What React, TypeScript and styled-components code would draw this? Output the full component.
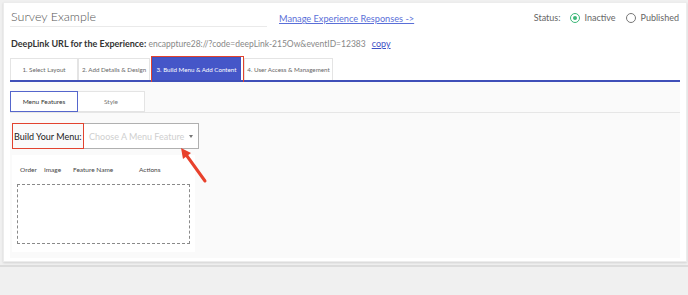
import React from 'react';
import styled, { createGlobalStyle } from 'styled-components';

const GlobalStyle = createGlobalStyle`
  html, body {
    margin: 0;
    padding: 0;
    background: #f0f0f0;
    font-family: Lato, 'Liberation Sans', sans-serif;
    color: #555;
  }
`;

const Page = styled.div`
  width: 688px;
  height: 295px;
  overflow: hidden;
`;

const Card = styled.div`
  margin: 2px 1px 0 3px;
  height: 260px;
  background: #fff;
  box-shadow: 0 1px 2px rgba(0, 0, 0, 0.12);
  border: 1px solid #ececec;
  box-sizing: border-box;
  padding: 0 6px;
  display: flex;
  flex-direction: column;
`;

const Footer = styled.div`
  margin-top: 3px;
  border-top: 2px solid #dcdcdc;
  height: 30px;
  background: #f0f0f0;
`;

const HeaderRow = styled.div`
  display: flex;
  align-items: flex-end;
  height: 24px;
  padding-top: 3px;
  box-sizing: border-box;
`;

const TitleInput = styled.div`
  width: 257px;
  height: 19px;
  border-bottom: 1px solid #eaeaea;
  font-size: 12.5px;
  font-weight: 300;
  color: #555;
  line-height: 17px;
  padding-left: 1px;
  box-sizing: border-box;
`;

const ManageLink = styled.a`
  margin-left: 12px;
  font-size: 9.2px;
  color: #5a6fd8;
  text-decoration: underline;
  line-height: 14px;
  margin-bottom: 1px;
`;

const Status = styled.div`
  margin-left: auto;
  display: flex;
  align-items: center;
  font-size: 9px;
  color: #666;
  line-height: 14px;
  margin-bottom: 2px;
  padding-right: 1px;
`;

const Radio = styled.span<{ $checked?: boolean }>`
  width: 8px;
  height: 8px;
  border-radius: 50%;
  border: 1.5px solid ${(p) => (p.$checked ? '#3cb878' : '#777')};
  display: inline-flex;
  align-items: center;
  justify-content: center;
  margin: 0 5px 0 ${(p) => (p.$checked ? 9 : 10)}px;
  &::after {
    content: '';
    width: 4px;
    height: 4px;
    border-radius: 50%;
    background: ${(p) => (p.$checked ? '#3cb878' : 'transparent')};
  }
`;

const DeepLinkRow = styled.div`
  margin-top: 10px;
  font-size: 9px;
  line-height: 14px;
  color: #888;
  padding-left: 1px;
`;

const Strong = styled.span`
  color: #333;
  font-weight: 700;
`;

const Value = styled.span`
  font-size: 8.5px;
`;

const CopyLink = styled.a`
  margin-left: 6px;
  color: #3f51c5;
  text-decoration: underline;
`;

const TabBar = styled.div`
  margin-top: 4px;
  display: flex;
  align-items: flex-end;
  border-bottom: 2px solid #3f4fb8;
  height: 25px;
  position: relative;
`;

const Tab = styled.div<{ $active?: boolean; $w: number }>`
  width: ${(p) => p.$w}px;
  height: ${(p) => (p.$active ? 23 : 22)}px;
  box-sizing: border-box;
  border: 1px solid ${(p) => (p.$active ? '#4052c0' : '#e4e4e4')};
  border-bottom: none;
  background: ${(p) => (p.$active ? '#4556c8' : '#fff')};
  color: ${(p) => (p.$active ? '#fff' : '#666')};
  font-size: 6.2px;
  display: flex;
  align-items: center;
  justify-content: center;
  white-space: nowrap;
  margin-right: ${(p) => (p.$active ? 3 : 0)}px;
  margin-left: ${(p) => (p.$active ? 2 : 0)}px;
`;

const Highlight = styled.div<{ $l: number; $t: number; $w: number; $h: number }>`
  position: absolute;
  left: ${(p) => p.$l}px;
  top: ${(p) => p.$t}px;
  width: ${(p) => p.$w}px;
  height: ${(p) => p.$h}px;
  border: 1.5px solid #e2432f;
  box-sizing: border-box;
  pointer-events: none;
`;

const Panel = styled.div`
  background: #fafafa;
  height: 176px;
  padding-top: 9px;
  box-sizing: border-box;
  position: relative;
`;

const SubTabs = styled.div`
  display: flex;
  border-bottom: 1px solid #e6e6e6;
  height: 21px;
`;

const SubTab = styled.div<{ $active?: boolean }>`
  width: ${(p) => (p.$active ? 68 : 67)}px;
  height: 21px;
  box-sizing: border-box;
  background: #fff;
  border: ${(p) => (p.$active ? '1.5px solid #5566cc' : '1px solid #e4e4e4')};
  border-left: ${(p) => (p.$active ? '1.5px solid #5566cc' : 'none')};
  font-size: 6.5px;
  color: ${(p) => (p.$active ? '#333' : '#777')};
  display: flex;
  align-items: center;
  justify-content: center;
`;

const BuildRow = styled.div`
  margin: 10px 0 0 2px;
  display: flex;
  height: 26px;
  position: relative;
`;

const BuildLabel = styled.div`
  width: 72px;
  box-sizing: border-box;
  display: flex;
  align-items: center;
  padding-left: 2px;
  font-size: 9px;
  color: #222;
  white-space: nowrap;
`;

const Select = styled.div`
  width: 115px;
  box-sizing: border-box;
  border: 1px solid #b0b0b0;
  border-left: none;
  background: #fff;
  display: flex;
  align-items: center;
  padding: 0 5px;
  font-size: 9px;
  color: #cfcfcf;
  white-space: nowrap;
  overflow: hidden;
`;

const Caret = styled.span`
  margin-left: auto;
  width: 0;
  height: 0;
  border-left: 2.5px solid transparent;
  border-right: 2.5px solid transparent;
  border-top: 3px solid #777;
`;

const TableArea = styled.div`
  margin: 6px 0 0 2px;
  width: 183px;
  height: 97px;
  background: #fff;
  padding: 6px 5px 0;
  box-sizing: border-box;
`;

const HeadRow = styled.div`
  display: grid;
  grid-template-columns: 24px 29px 66px auto;
  font-size: 6.5px;
  color: #444;
  padding-left: 3px;
  height: 16px;
  align-items: center;
`;

const DropZone = styled.div`
  margin-top: 7px;
  height: 58px;
  border: 1px dashed #8a8a8a;
  background: #fff;
`;

const Arrow = styled.svg`
  position: absolute;
  left: 160px;
  top: 55px;
  overflow: visible;
`;

export default function App() {
  return (
    <Page>
      <GlobalStyle />
      <Card>
        <HeaderRow>
          <TitleInput>Survey Example</TitleInput>
          <ManageLink>Manage Experience Responses -&gt;</ManageLink>
          <Status>
            Status:
            <Radio $checked />
            Inactive
            <Radio />
            Published
          </Status>
        </HeaderRow>
        <DeepLinkRow>
          <Strong>DeepLink URL for the Experience:</Strong>{' '}
          <Value>encappture28://?code=deepLink-215Ow&amp;eventID=12383</Value>
          <CopyLink>copy</CopyLink>
        </DeepLinkRow>
        <TabBar>
          <Tab $w={68}>1. Select Layout</Tab>
          <Tab $w={72}>2. Add Details &amp; Design</Tab>
          <Tab $w={89} $active>3. Build Menu &amp; Add Content</Tab>
          <Tab $w={89}>4. User Access &amp; Management</Tab>
          <Highlight $l={141} $t={1} $w={93} $h={32} />
        </TabBar>
        <Panel>
          <SubTabs>
            <SubTab $active>Menu Features</SubTab>
            <SubTab>Style</SubTab>
          </SubTabs>
          <BuildRow>
            <BuildLabel>Build Your Menu:</BuildLabel>
            <Select>
              Choose A Menu Feature
              <Caret />
            </Select>
            <Highlight $l={0} $t={0} $w={72} $h={26} />
          </BuildRow>
          <TableArea>
            <HeadRow>
              <span>Order</span>
              <span>Image</span>
              <span>Feature Name</span>
              <span>Actions</span>
            </HeadRow>
            <DropZone />
          </TableArea>
          <Arrow width="50" height="50">
            <line x1="35" y1="44" x2="17" y2="19" stroke="#e8412c" strokeWidth="3" strokeLinecap="round" />
            <polygon points="11,11 21,16 13,22" fill="#e8412c" />
          </Arrow>
        </Panel>
      </Card>
      <Footer />
    </Page>
  );
}
